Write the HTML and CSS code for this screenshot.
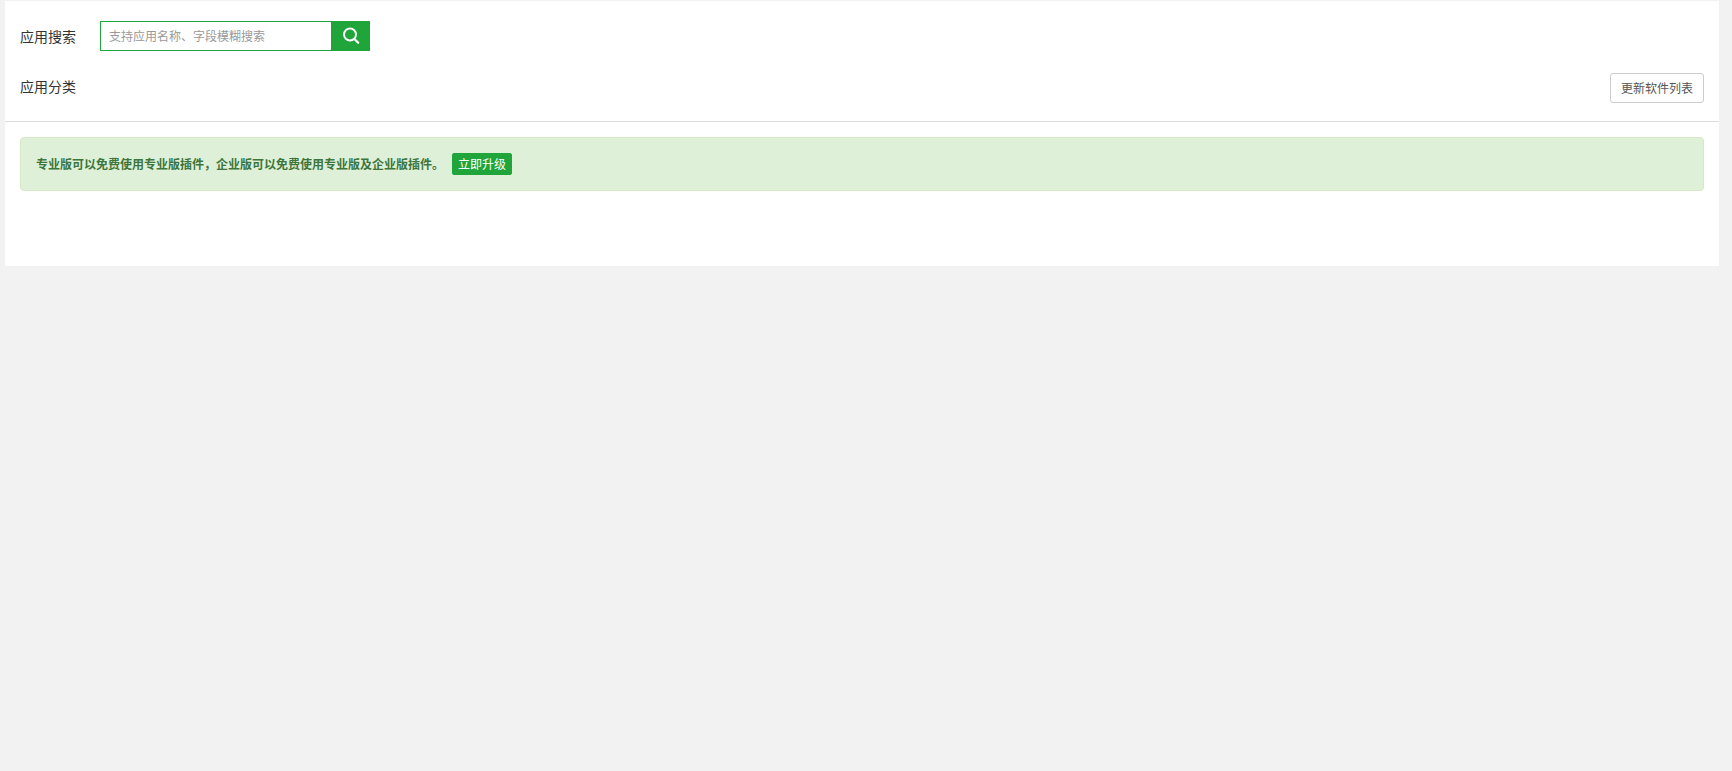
FILE: index.html
```html
<!DOCTYPE html>
<html lang="zh-CN">

<head>
    <title>软件管理</title>
    <meta charset="UTF-8">
    <meta name="viewport" content="width=device-width, initial-scale=1.0">
    <link rel="stylesheet" href="styles.css">
</head>

<body>
    <div class="panel">
        <div class="panel-head">
            <form class="row">
                <label class="row-title" for="searchInput">应用搜索</label>
                <div class="search">
                    <input type="text" id="searchInput" name="search" placeholder="支持应用名称、字段模糊搜索">
                    <button type="submit" class="search-btn" aria-label="搜索">
                        <svg width="18" height="18" viewBox="0 0 18 18" fill="none" stroke="#fff">
                            <circle cx="8" cy="7.5" r="6" stroke-width="1.9" />
                            <path d="M12.4 12L16.2 15.8" stroke-width="2.2" stroke-linecap="round" />
                        </svg>
                    </button>
                </div>
            </form>
            <div class="row row-type">
                <span class="row-title">应用分类</span>
                <button type="button" class="btn-default">更新软件列表</button>
            </div>
        </div>
        <div class="panel-body">
            <div class="alert">
                <strong>专业版可以免费使用专业版插件，企业版可以免费使用专业版及企业版插件。</strong>
                <button type="button" class="btn-success">立即升级</button>
            </div>
        </div>
    </div>
</body>

</html>
```
FILE: styles.css
```css
:root {
    --green: #20a53a;
}

* {
    box-sizing: border-box;
}

body {
    margin: 0;
    padding: 1px 13px 0 5px;
    background: #f2f2f2;
    color: #333;
    font-family: "Noto Sans CJK SC", sans-serif;
    font-size: 12px;
    line-height: 20px;
}

input,
button {
    font: inherit;
}

button {
    padding: 0;
    cursor: pointer;
}

.panel {
    background: #fff;
}

.panel-head {
    display: flex;
    flex-direction: column;
    gap: 22px;
    padding: 20px 15px 18px;
    border-bottom: 1px solid #ddd;
}

.row {
    display: flex;
    align-items: center;
}

.row-type {
    align-items: flex-start;
}

.row-title {
    width: 80px;
    font-size: 14px;
    line-height: 26px;
}

.search {
    display: flex;
    height: 30px;
}

.search input {
    width: 231px;
    padding: 0 8px;
    border: 1px solid var(--green);
    border-right: none;
    outline: none;
    color: #555;
}

.search input::placeholder {
    color: #999;
}

.search-btn {
    display: flex;
    align-items: center;
    justify-content: center;
    width: 39px;
    border: none;
    background: var(--green);
}

.btn-default {
    height: 30px;
    margin-left: auto;
    padding: 0 10px;
    border: 1px solid #ccc;
    border-radius: 3px;
    background: #fff;
    color: #555;
}

.btn-default:hover {
    background: #e6e6e6;
}

.panel-body {
    padding: 15px 15px 75px;
}

.alert {
    display: flex;
    align-items: center;
    gap: 8px;
    padding: 15px;
    border: 1px solid #d6e9c6;
    border-radius: 4px;
    background: #dff0d8;
    color: #3c763d;
}

.btn-success {
    height: 22px;
    padding: 0 5px;
    border: 1px solid var(--green);
    border-radius: 2px;
    background: var(--green);
    color: #fff;
}

.btn-success:hover {
    background: #10952a;
}
```
